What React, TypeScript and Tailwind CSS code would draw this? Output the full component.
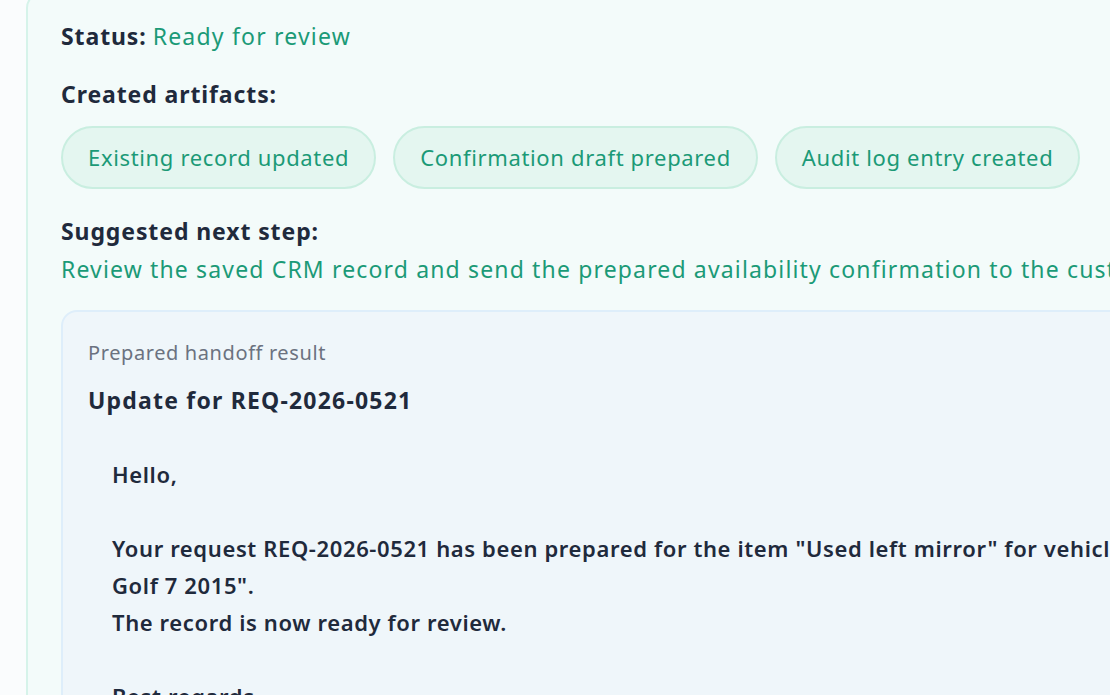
const artifacts = [
  'Existing record updated',
  'Confirmation draft prepared',
  'Audit log entry created',
]

const Pill = ({ label }: { label: string }) => (
  <div className="flex h-[63px] items-center rounded-full border-2 border-[#c9eee0] bg-[#e4f6f0] px-[25px] text-[22px] tracking-[0.65px] text-[#1b9a77] whitespace-nowrap">
    {label}
  </div>
)

const App = () => {
  return (
    <div className="h-[695px] w-[1110px] overflow-hidden bg-[#fafcfd] pl-[26px] font-['Noto_Sans',sans-serif]">
      <div className="-mt-[8px] w-[1120px] rounded-[16px] border-2 border-[#d6f3ea] bg-[#f3fbfa] pl-[33px] pt-[24px]">
        <div className="text-[23px] leading-[37px] whitespace-nowrap">
          <span className="font-bold tracking-[0.9px] text-[#1f2a3c]">Status:</span>{' '}
          <span className="tracking-[1.2px] text-[#1b9a77]">Ready for review</span>
        </div>

        <div className="mt-[21px] text-[23px] font-bold leading-[37px] tracking-[0.9px] text-[#1f2a3c]">
          Created artifacts:
        </div>

        <div className="mt-[13px] flex flex-row gap-[17px]">
          {artifacts.map((a) => (
            <Pill key={a} label={a} />
          ))}
        </div>

        <div className="mt-[24px] text-[23px] font-bold leading-[37px] tracking-[0.9px] text-[#1f2a3c]">
          Suggested next step:
        </div>
        <div className="mt-[1px] whitespace-nowrap text-[23px] leading-[37px] tracking-[1.15px] text-[#1b9a77]">
          Review the saved CRM record and send the prepared availability confirmation to the customer.
        </div>

        <div className="mt-[22px] rounded-[16px] border-2 border-[#deeefa] bg-[#eff6fa] px-[25px] pt-[24px] pb-10">
          <div className="text-[20px] leading-[34px] tracking-[0.6px] text-[#6b7280]">Prepared handoff result</div>
          <div className="mt-[13px] text-[23px] font-bold leading-[34px] tracking-[1.2px] text-[#1f2a3c]">
            Update for REQ-2026-0521
          </div>
          <div className="mt-[39px] pl-[24px] text-[22px] font-semibold leading-[37px] tracking-[0.62px] text-[#1f2a3c]">
            <div>Hello,</div>
            <div className="h-[37px]" />
            <div className="whitespace-nowrap">
              Your request REQ-2026-0521 has been prepared for the item "Used left mirror" for vehicle "Volkswagen
            </div>
            <div>Golf 7 2015".</div>
            <div>The record is now ready for review.</div>
            <div className="h-[37px]" />
            <div>Best regards</div>
          </div>
        </div>
      </div>
    </div>
  )
}

export default App
